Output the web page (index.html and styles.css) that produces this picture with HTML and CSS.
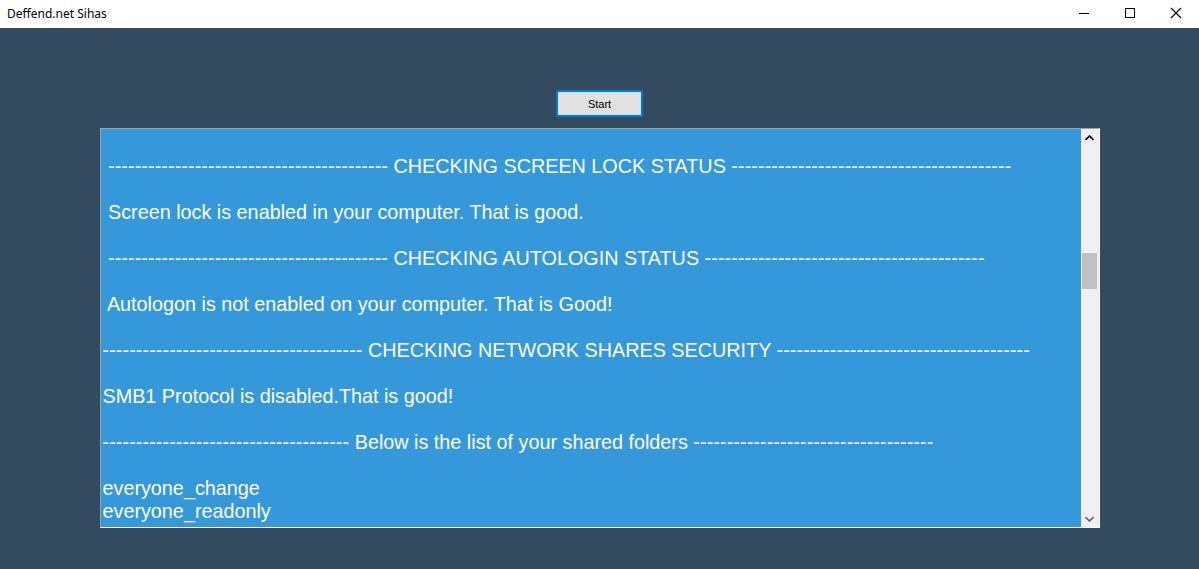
FILE: index.html
```html
<!DOCTYPE html>
<html lang="en">
<head>
  <meta charset="UTF-8" />
  <title>Deffend.net Sihas</title>
  <link rel="stylesheet" href="styles.css">
</head>
<body>

  <!-- Barra de titulo -->
  <header class="titlebar">
    <span class="title">Deffend.net Sihas</span>
    <div class="controls">
      <span class="ctl">
        <svg width="12" height="12" viewBox="0 0 12 12"><path d="M1 6.5h10" stroke="#000" stroke-width="1"/></svg>
      </span>
      <span class="ctl">
        <svg width="12" height="12" viewBox="0 0 12 12"><rect x="1.5" y="1.5" width="9" height="9" fill="none" stroke="#000" stroke-width="1"/></svg>
      </span>
      <span class="ctl">
        <svg width="12" height="12" viewBox="0 0 12 12"><path d="M1 1l10 10M11 1L1 11" stroke="#000" stroke-width="1.1"/></svg>
      </span>
    </div>
  </header>

  <main class="window">
    <button class="start">Start</button>

    <div class="output">
      <div class="log">
        <div class="line"> </div>
        <div class="line"> <span class="dash">------------------------------------------</span> CHECKING SCREEN LOCK STATUS <span class="dash">------------------------------------------</span></div>
        <div class="line"> </div>
        <div class="line"> Screen lock is enabled in your computer. That is good.</div>
        <div class="line"> </div>
        <div class="line"> <span class="dash">------------------------------------------</span> CHECKING AUTOLOGIN STATUS <span class="dash">------------------------------------------</span></div>
        <div class="line"> </div>
        <div class="line"> Autologon is not enabled on your computer. That is Good!</div>
        <div class="line"> </div>
        <div class="line"><span class="dash">---------------------------------------</span> CHECKING NETWORK SHARES SECURITY <span class="dash">--------------------------------------</span></div>
        <div class="line"> </div>
        <div class="line">SMB1 Protocol is disabled.That is good!</div>
        <div class="line"> </div>
        <div class="line"><span class="dash">-------------------------------------</span> Below is the list of your shared folders <span class="dash">------------------------------------</span></div>
        <div class="line"> </div>
        <div class="line">everyone_change</div>
        <div class="line">everyone_readonly</div>
      </div>

      <!-- barra de desplazamiento -->
      <div class="scrollbar">
        <span class="arrow">
          <svg width="9" height="6" viewBox="0 0 9 6"><path d="M0.5 5L4.5 1L8.5 5" fill="none" stroke="#000" stroke-width="1.6"/></svg>
        </span>
        <div class="track">
          <div class="thumb"></div>
        </div>
        <span class="arrow">
          <svg width="9" height="6" viewBox="0 0 9 6"><path d="M0.5 1L4.5 5L8.5 1" fill="none" stroke="#606060" stroke-width="1.6"/></svg>
        </span>
      </div>
    </div>
  </main>

</body>
</html>
```

FILE: styles.css
```css
body {
  margin: 0;
  background-color: #344a5e;
  font-family: "Liberation Sans", Arial, sans-serif;
  height: 569px;
  overflow: hidden;
}
.titlebar {
  height: 28px;
  background-color: #fff;
  display: flex;
  justify-content: space-between;
  align-items: center;
}
.title {
  font-family: "Noto Sans", "Open Sans", sans-serif;
  font-size: 12px;
  color: #000;
  padding-left: 7px;
  padding-bottom: 2px;
}
.controls {
  display: flex;
  height: 100%;
}
.ctl {
  width: 46px;
  display: flex;
  align-items: center;
  justify-content: center;
  padding-bottom: 3px;
}
.window {
  display: flex;
  flex-direction: column;
  align-items: center;
  padding-top: 62px;
}
.start {
  width: 87px;
  height: 27px;
  background-color: #e1e1e1;
  border: 2px solid #0078d7;
  box-shadow: inset 0 0 0 1px #cce4f7;
  font-family: "Liberation Sans", Arial, sans-serif;
  font-size: 11px;
  color: #000;
  padding: 0;
  margin-bottom: 11px;
}
.output {
  width: 1000px;
  height: 400px;
  box-sizing: border-box;
  border-top: 1px solid #a0a0a0;
  border-left: 1px solid #a0a0a0;
  border-right: 1px solid #fff;
  border-bottom: 1px solid #fff;
  display: flex;
  background-color: #3498db;
}
.log {
  flex: 1;
  overflow: hidden;
  padding: 3px 0 0 2px;
  color: #fff;
  font-size: 19.8px;
  line-height: 23px;
}
.line {
  height: 23px;
  white-space: pre;
}
.dash {
  letter-spacing: 0.08px;
}
.scrollbar {
  width: 17px;
  background-color: #f0f0f0;
  display: flex;
  flex-direction: column;
  border-right: 1px solid #e6e6e6;
}
.arrow {
  height: 17px;
  display: flex;
  align-items: center;
  justify-content: center;
}
.track {
  flex: 1;
  padding-top: 107px;
}
.thumb {
  height: 36px;
  margin: 0 1px;
  background-color: #c1c1c1;
}
```
